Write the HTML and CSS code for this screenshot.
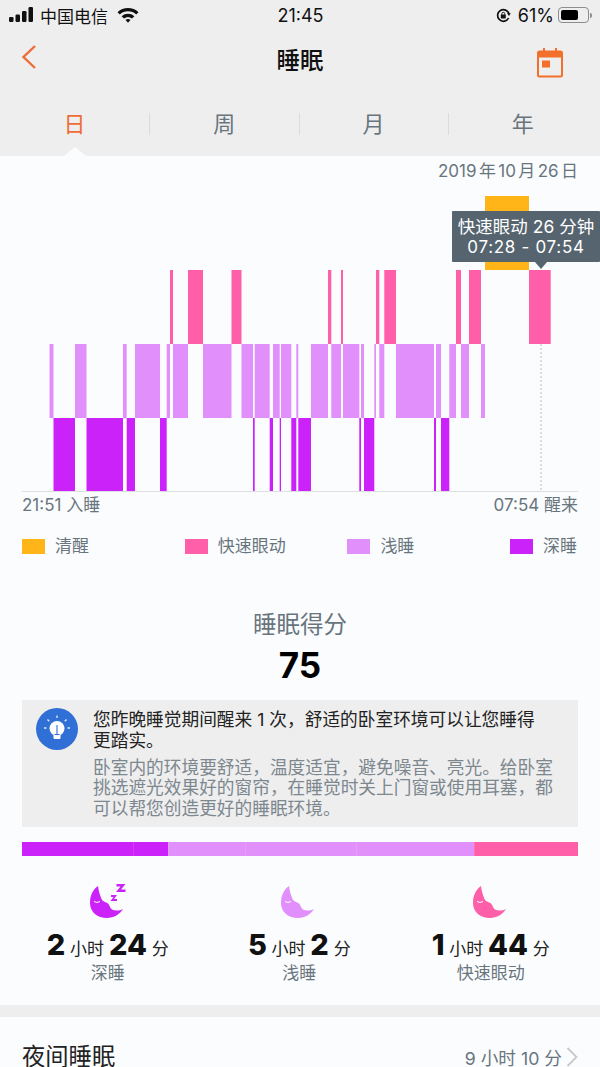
FILE: index.html
```html
<!DOCTYPE html>
<html>
<head>
  <meta charset="UTF-8">
  <title>睡眠</title>
  <link rel="stylesheet" href="styles.css">
</head>
<body>
  <div id="page">
    <div id="topArea">
      <div class="status-bar">
        <div class="status-left">
          <svg class="signal" width="24" height="16" viewBox="0 0 24 16">
            <rect x="0" y="10" width="4.5" height="5" rx="1.2"/>
            <rect x="6.5" y="7.5" width="4.5" height="7.5" rx="1.2"/>
            <rect x="13" y="4" width="4.5" height="11" rx="1.2"/>
            <rect x="19.5" y="0" width="4.5" height="15" rx="1.2"/>
          </svg>
          <span class="carrier">中国电信</span>
          <svg class="wifi" width="22" height="16" viewBox="0 0 22 16">
            <path d="M0.5 5.2 A15.5 15.5 0 0 1 21.5 5.2 L19.2 7.6 A12 12 0 0 0 2.8 7.6 Z"/>
            <path d="M4.6 9.2 A9.8 9.8 0 0 1 17.4 9.2 L15 11.5 A6.4 6.4 0 0 0 7 11.5 Z"/>
            <path d="M8.5 13 A4 4 0 0 1 13.5 13 L11 15.8 Z"/>
          </svg>
        </div>
        <div class="status-time">21:45</div>
        <div class="status-right">
          <svg class="rotate-lock" width="15" height="15" viewBox="0 0 15 15">
            <path d="M12.6 10 A5.8 5.8 0 1 1 13 6" fill="none" stroke="#111" stroke-width="1.7"/>
            <path d="M14.8 5.2 L11 5.2 L13 8 Z" fill="#111"/>
            <rect x="4.8" y="6.6" width="5" height="3.8" rx="0.6" fill="#111"/>
            <path d="M5.8 6.8 V5.8 A1.5 1.5 0 0 1 8.8 5.8 V6.8" fill="none" stroke="#111" stroke-width="0.9"/>
          </svg>
          <span class="battery-text">61%</span>
          <div class="battery"><div class="battery-level"></div></div>
          <div class="battery-tip"></div>
        </div>
      </div>
      <div class="nav-bar">
        <svg class="back" width="18" height="28" viewBox="0 0 18 28">
          <path d="M15 3 L3.5 14 L15 25" fill="none" stroke="#ee6c36" stroke-width="2.4"/>
        </svg>
        <div class="nav-title">睡眠</div>
        <svg class="calendar" width="28" height="30" viewBox="0 0 28 30">
          <rect x="7" y="0" width="2" height="5" fill="#f36f2c"/>
          <rect x="19" y="0" width="2" height="5" fill="#f36f2c"/>
          <rect x="2" y="3.5" width="24" height="6" fill="#f36f2c"/>
          <rect x="2" y="3.5" width="24" height="25" rx="1.5" fill="none" stroke="#f36f2c" stroke-width="2"/>
          <rect x="6" y="12.5" width="8" height="7" fill="#f36f2c"/>
        </svg>
      </div>
      <div class="tabs">
        <div class="tab tab-active">日</div>
        <div class="tab">周</div>
        <div class="tab">月</div>
        <div class="tab">年</div>
      </div>
    </div>

    <div class="date-row">2019 年 10 月 26 日</div>

    <div class="chart">
      <svg class="chart-bars" width="600" height="312" viewBox="0 180 600 312">
        <rect class="awake" x="485" y="196" width="44" height="74"/>

        <rect class="rem" x="170" y="270" width="3" height="74"/>
        <rect class="rem" x="188" y="270" width="15" height="74"/>
        <rect class="rem" x="231.5" y="270" width="10" height="74"/>
        <rect class="rem" x="328" y="270" width="3.3" height="74"/>
        <rect class="rem" x="341" y="270" width="2" height="74"/>
        <rect class="rem" x="376" y="270" width="3.3" height="74"/>
        <rect class="rem" x="384.3" y="270" width="11.7" height="74"/>
        <rect class="rem" x="456" y="270" width="5" height="74"/>
        <rect class="rem" x="469" y="270" width="12" height="74"/>
        <rect class="rem" x="529" y="270" width="21.7" height="74"/>

        <rect class="light" x="49.5" y="344" width="4" height="74"/>
        <rect class="light" x="75" y="344" width="11.5" height="74"/>
        <rect class="light" x="123" y="344" width="3.7" height="74"/>
        <rect class="light" x="135" y="344" width="25" height="74"/>
        <rect class="light" x="166.7" y="344" width="3.3" height="74"/>
        <rect class="light" x="173" y="344" width="15" height="74"/>
        <rect class="light" x="203" y="344" width="28.5" height="74"/>
        <rect class="light" x="241.5" y="344" width="11.5" height="74"/>
        <rect class="light" x="254.7" y="344" width="15" height="74"/>
        <rect class="light" x="273" y="344" width="6.7" height="74"/>
        <rect class="light" x="281" y="344" width="10.3" height="74"/>
        <rect class="light" x="296.3" y="344" width="2" height="74"/>
        <rect class="light" x="311" y="344" width="17" height="74"/>
        <rect class="light" x="331.3" y="344" width="9.7" height="74"/>
        <rect class="light" x="343" y="344" width="16.3" height="74"/>
        <rect class="light" x="361" y="344" width="3" height="74"/>
        <rect class="light" x="374.3" y="344" width="1.7" height="74"/>
        <rect class="light" x="379.3" y="344" width="5" height="74"/>
        <rect class="light" x="396" y="344" width="38" height="74"/>
        <rect class="light" x="436" y="344" width="5" height="74"/>
        <rect class="light" x="449.3" y="344" width="6.7" height="74"/>
        <rect class="light" x="461" y="344" width="8" height="74"/>
        <rect class="light" x="481" y="344" width="4" height="74"/>

        <rect class="deep" x="53.5" y="418" width="21.5" height="74"/>
        <rect class="deep" x="86.5" y="418" width="36.5" height="74"/>
        <rect class="deep" x="126.7" y="418" width="8.3" height="74"/>
        <rect class="deep" x="160" y="418" width="6.7" height="74"/>
        <rect class="deep" x="253" y="418" width="1.7" height="74"/>
        <rect class="deep" x="269.7" y="418" width="3.3" height="74"/>
        <rect class="deep" x="279.7" y="418" width="1.3" height="74"/>
        <rect class="deep" x="291.3" y="418" width="5" height="74"/>
        <rect class="deep" x="298.3" y="418" width="12.7" height="74"/>
        <rect class="deep" x="359.3" y="418" width="1.7" height="74"/>
        <rect class="deep" x="364" y="418" width="10.3" height="74"/>
        <rect class="deep" x="434" y="418" width="2" height="74"/>
        <rect class="deep" x="441" y="418" width="8.3" height="74"/>

        <line class="baseline" x1="22" y1="491.5" x2="578" y2="491.5"/>
        <line class="marker" x1="541" y1="344" x2="541" y2="491"/>
      </svg>
      <div class="tooltip">
        <div>快速眼动 26 分钟</div>
        <div class="tooltip-time">07:28 - 07:54</div>
      </div>
    </div>

    <div class="time-row">
      <span>21:51 入睡</span>
      <span>07:54 醒来</span>
    </div>

    <div class="legend">
      <div class="legend-item"><i class="swatch swatch-awake"></i>清醒</div>
      <div class="legend-item"><i class="swatch swatch-rem"></i>快速眼动</div>
      <div class="legend-item"><i class="swatch swatch-light"></i>浅睡</div>
      <div class="legend-item"><i class="swatch swatch-deep"></i>深睡</div>
    </div>

    <div class="score">
      <div class="score-label">睡眠得分</div>
      <div class="score-value">75</div>
    </div>

    <div class="tip">
      <svg class="tip-icon" width="42" height="42" viewBox="0 0 42 42">
        <circle cx="21" cy="21" r="21" fill="#2f6fd6"/>
        <circle cx="21" cy="20.5" r="7.5" fill="#fff"/>
        <rect x="17.5" y="26.5" width="7" height="4.5" rx="1" fill="#fff"/>
        <path d="M21 17 V26.5 M18.5 26.5 H23.5" fill="none" stroke="#2f6fd6" stroke-width="1.1"/>
        <path d="M21 7.5 V10 M11.5 11.5 L13.2 13.2 M30.5 11.5 L28.8 13.2 M8 20 H10.5 M31.5 20 H34" stroke="#dfe9fa" stroke-width="1.4"/>
      </svg>
      <div class="tip-text">
        <div class="tip-title">您昨晚睡觉期间醒来 1 次，舒适的卧室环境可以让您睡得<br>更踏实。</div>
        <div class="tip-body">卧室内的环境要舒适，温度适宜，避免噪音、亮光。给卧室挑选遮光效果好的窗帘，在睡觉时关上门窗或使用耳塞，都可以帮您创造更好的睡眠环境。</div>
      </div>
    </div>

    <div class="ratio-bar">
      <div class="ratio-deep ratio-w1"></div>
      <div class="ratio-deep ratio-w2"></div>
      <div class="ratio-light ratio-w3"></div>
      <div class="ratio-light ratio-w4"></div>
      <div class="ratio-light ratio-w5"></div>
      <div class="ratio-rem ratio-w6"></div>
    </div>

    <div class="stats">
      <div class="stat">
        <svg class="moon" width="40" height="36" viewBox="0 0 40 36">
          <path class="moon-deep" d="M10 3 C4.5 7 2 13 2 20 C2 29 9.5 35 19 35 C26 35 32 31 35 26 C31 28 27 28 24 26.5 C22 25 21.5 22 20 20.5 C18 19 15 19 13.5 16 C12 12 10.5 8 10 3 Z"/>
          <path d="M6 18.5 Q9 20.5 12 18.5" fill="none" stroke="#fff" stroke-width="1"/>
          <path class="moon-deep" d="M23 12 H29 L26 16 H29 V18 H22.5 L25.5 14 H23 Z"/>
          <path class="moon-deep" d="M28.5 1 H37.5 L33 6.5 H37.5 V9 H28 L32.5 3.5 H28.5 Z"/>
        </svg>
        <div class="stat-value"><b>2</b> 小时 <b>24</b> 分</div>
        <div class="stat-label">深睡</div>
      </div>
      <div class="stat">
        <svg class="moon" width="40" height="36" viewBox="0 0 40 36">
          <path class="moon-light" d="M10 3 C4.5 7 2 13 2 20 C2 29 9.5 35 19 35 C26 35 32 31 35 26 C31 28 27 28 24 26.5 C22 25 21.5 22 20 20.5 C18 19 15 19 13.5 16 C12 12 10.5 8 10 3 Z"/>
          <path d="M6 18.5 Q9 20.5 12 18.5" fill="none" stroke="#fff" stroke-width="1"/>
        </svg>
        <div class="stat-value"><b>5</b> 小时 <b>2</b> 分</div>
        <div class="stat-label">浅睡</div>
      </div>
      <div class="stat">
        <svg class="moon" width="40" height="36" viewBox="0 0 40 36">
          <path class="moon-rem" d="M10 3 C4.5 7 2 13 2 20 C2 29 9.5 35 19 35 C26 35 32 31 35 26 C31 28 27 28 24 26.5 C22 25 21.5 22 20 20.5 C18 19 15 19 13.5 16 C12 12 10.5 8 10 3 Z"/>
          <path d="M6 18.5 Q9 20.5 12 18.5" fill="none" stroke="#fff" stroke-width="1"/>
        </svg>
        <div class="stat-value"><b>1</b> 小时 <b>44</b> 分</div>
        <div class="stat-label">快速眼动</div>
      </div>
    </div>

    <div class="divider"></div>

    <div class="section-row">
      <div class="section-title">夜间睡眠</div>
      <div class="section-value">9 小时 10 分
        <svg class="chevron" width="12" height="20" viewBox="0 0 12 20">
          <path d="M1.5 1 L10.5 10 L1.5 19" fill="none" stroke="#c8c8c8" stroke-width="1.8"/>
        </svg>
      </div>
    </div>
  </div>
</body>
</html>
```

FILE: styles.css
```css
html, body {
  margin: 0;
  height: 100%;
  overflow: hidden;
}
body {
  font-family: 'Inter', 'Liberation Sans', 'Noto Sans CJK SC', sans-serif;
  background-color: #fbfcfe;
  color: #68757d;
}
#page {
  height: 1067px;
  overflow: hidden;
  display: flex;
  flex-direction: column;
}
#topArea {
  background-color: #eeeeee;
  height: 156px;
  flex-shrink: 0;
}
.status-bar {
  height: 30px;
  display: grid;
  grid-template-columns: 1fr auto 1fr;
  align-items: center;
  padding: 0 8px 0 9px;
  font-size: 17px;
  color: #111;
}
.status-left {
  display: flex;
  align-items: center;
}
.signal, .wifi {
  fill: #111;
}
.carrier {
  margin-left: 7px;
}
.wifi {
  margin-left: 9px;
}
.status-time {
  font-size: 18px;
}
.status-right {
  display: flex;
  align-items: center;
  justify-content: flex-end;
}
.battery-text {
  font-size: 18px;
  margin-left: 7px;
  margin-right: 4px;
}
.battery {
  width: 31px;
  height: 16px;
  border: 1px solid #8d8d8d;
  border-radius: 4px;
  padding: 2px;
  box-sizing: border-box;
}
.battery-level {
  width: 17px;
  height: 100%;
  background-color: #000;
  border-radius: 2px;
}
.battery-tip {
  width: 2px;
  height: 5px;
  background-color: #8d8d8d;
  margin-left: 1px;
  border-radius: 0 2px 2px 0;
}
.nav-bar {
  height: 60px;
  display: grid;
  grid-template-columns: 1fr auto 1fr;
  align-items: center;
  padding: 0 20px;
}
.back {
  margin-top: -6px;
}
.nav-title {
  font-size: 23.5px;
  font-weight: 500;
  color: #111;
  margin-top: -2px;
}
.calendar {
  margin-top: 6px;
  margin-right: 16px;
  justify-self: end;
}
.tabs {
  display: flex;
  padding-top: 23px;
  width: 598px;
}
.tab {
  position: relative;
  width: 149.25px;
  height: 22px;
  line-height: 22px;
  text-align: center;
  font-size: 22px;
  color: #68757d;
  border-left: 1px solid #dcdcdc;
  box-sizing: border-box;
}
.tab:first-child {
  border-left: none;
}
.tab-active {
  color: #ee6c36;
}
.tab-active::after {
  content: '';
  position: absolute;
  left: 50%;
  top: 34px;
  margin-left: -11px;
  border-left: 11px solid transparent;
  border-right: 11px solid transparent;
  border-bottom: 9px solid #fbfcfe;
}
.date-row {
  font-size: 17px;
  line-height: 20px;
  padding: 5px 22px 0;
  text-align: right;
  word-spacing: -2.4px;
  height: 19px;
  flex-shrink: 0;
}
.chart {
  position: relative;
  height: 312px;
  flex-shrink: 0;
}
.chart-bars {
  display: block;
}
.awake { fill: #ffb518; }
.rem { fill: #ff5fa8; }
.light { fill: #e08ffb; }
.deep { fill: #cb22fa; }
.baseline {
  stroke: #dddfe3;
  stroke-width: 1;
}
.marker {
  stroke: #b9bdc4;
  stroke-width: 1;
  stroke-dasharray: 2 2;
}
.tooltip {
  position: absolute;
  left: 452px;
  top: 31px;
  width: 148px;
  height: 51px;
  box-sizing: border-box;
  padding-top: 6px;
  background-color: #55646e;
  border-radius: 1px;
  color: #fff;
  font-size: 17.5px;
  line-height: 20px;
  text-align: center;
  white-space: nowrap;
}
.tooltip-time {
  font-size: 17px;
  letter-spacing: 0.7px;
}
.tooltip::after {
  content: '';
  position: absolute;
  left: 83px;
  top: 51px;
  border-left: 6px solid transparent;
  border-right: 6px solid transparent;
  border-top: 7px solid #55646e;
}
.time-row {
  display: flex;
  justify-content: space-between;
  padding: 3px 22px 0;
  font-size: 17px;
  line-height: 20px;
  flex-shrink: 0;
}
.legend {
  display: grid;
  grid-template-columns: repeat(4, 162.7px);
  padding: 20px 0 0 22px;
  font-size: 17px;
  line-height: 22px;
  flex-shrink: 0;
}
.legend-item {
  display: flex;
  align-items: center;
  gap: 10px;
}
.swatch {
  display: block;
  width: 23px;
  height: 15px;
}
.swatch-awake { background-color: #ffb518; }
.swatch-rem { background-color: #ff5fa8; }
.swatch-light { background-color: #e08ffb; }
.swatch-deep { background-color: #cb22fa; }
.score {
  text-align: center;
  padding-top: 53px;
  flex-shrink: 0;
}
.score-label {
  font-size: 23.5px;
  line-height: 30px;
}
.score-value {
  font-size: 35px;
  font-weight: 700;
  line-height: 50px;
  color: #000;
}
.tip {
  display: flex;
  margin: 10px 22px 0;
  height: 127px;
  box-sizing: border-box;
  padding: 8px 0 0 14px;
  gap: 15px;
  background-color: #eeeeee;
  flex-shrink: 0;
}
.tip-icon {
  flex-shrink: 0;
}
.tip-text {
  width: 462px;
  padding-top: 2px;
}
.tip-title {
  font-size: 17.7px;
  line-height: 20.5px;
  color: #222;
}
.tip-body {
  font-size: 17.7px;
  line-height: 20.5px;
  margin-top: 6.5px;
  color: #7d878e;
}
.ratio-bar {
  display: flex;
  margin: 15px 22px 0;
  height: 14px;
  flex-shrink: 0;
}
.ratio-bar div + div {
  border-left: 1px solid rgba(255,255,255,0.12);
  box-sizing: border-box;
}
.ratio-deep { background-color: #cb22fa; }
.ratio-light { background-color: #e08ffb; }
.ratio-rem { background-color: #ff5fa8; }
.ratio-w1 { width: 111px; }
.ratio-w2 { width: 35px; }
.ratio-w3 { width: 77px; }
.ratio-w4 { width: 111px; }
.ratio-w5 { width: 118px; }
.ratio-w6 { width: 104px; }
.stats {
  display: flex;
  padding: 27px 0 0 12px;
  height: 149px;
  box-sizing: border-box;
  flex-shrink: 0;
}
.stat {
  display: flex;
  flex-direction: column;
  align-items: center;
  width: 191.5px;
}
.moon {
  display: block;
  height: 36px;
}
.moon-deep { fill: #cb22fa; }
.moon-light { fill: #e08ffb; }
.moon-rem { fill: #ff5fa8; }
.stat-value {
  font-size: 17px;
  line-height: 30px;
  margin-top: 11px;
  color: #222;
  white-space: nowrap;
}
.stat-value b {
  font-size: 29px;
  font-weight: 800;
  color: #111;
}
.stat-label {
  font-size: 17px;
  line-height: 22px;
  margin-top: -2px;
}
.divider {
  height: 12px;
  background-color: #eeeeee;
  flex-shrink: 0;
}
.section-row {
  display: flex;
  justify-content: space-between;
  align-items: center;
  padding: 25px 22px 0;
  flex-shrink: 0;
}
.section-title {
  font-size: 23.3px;
  line-height: 30px;
  color: #222;
}
.section-value {
  display: flex;
  align-items: center;
  gap: 4px;
  font-size: 17.7px;
}
```
